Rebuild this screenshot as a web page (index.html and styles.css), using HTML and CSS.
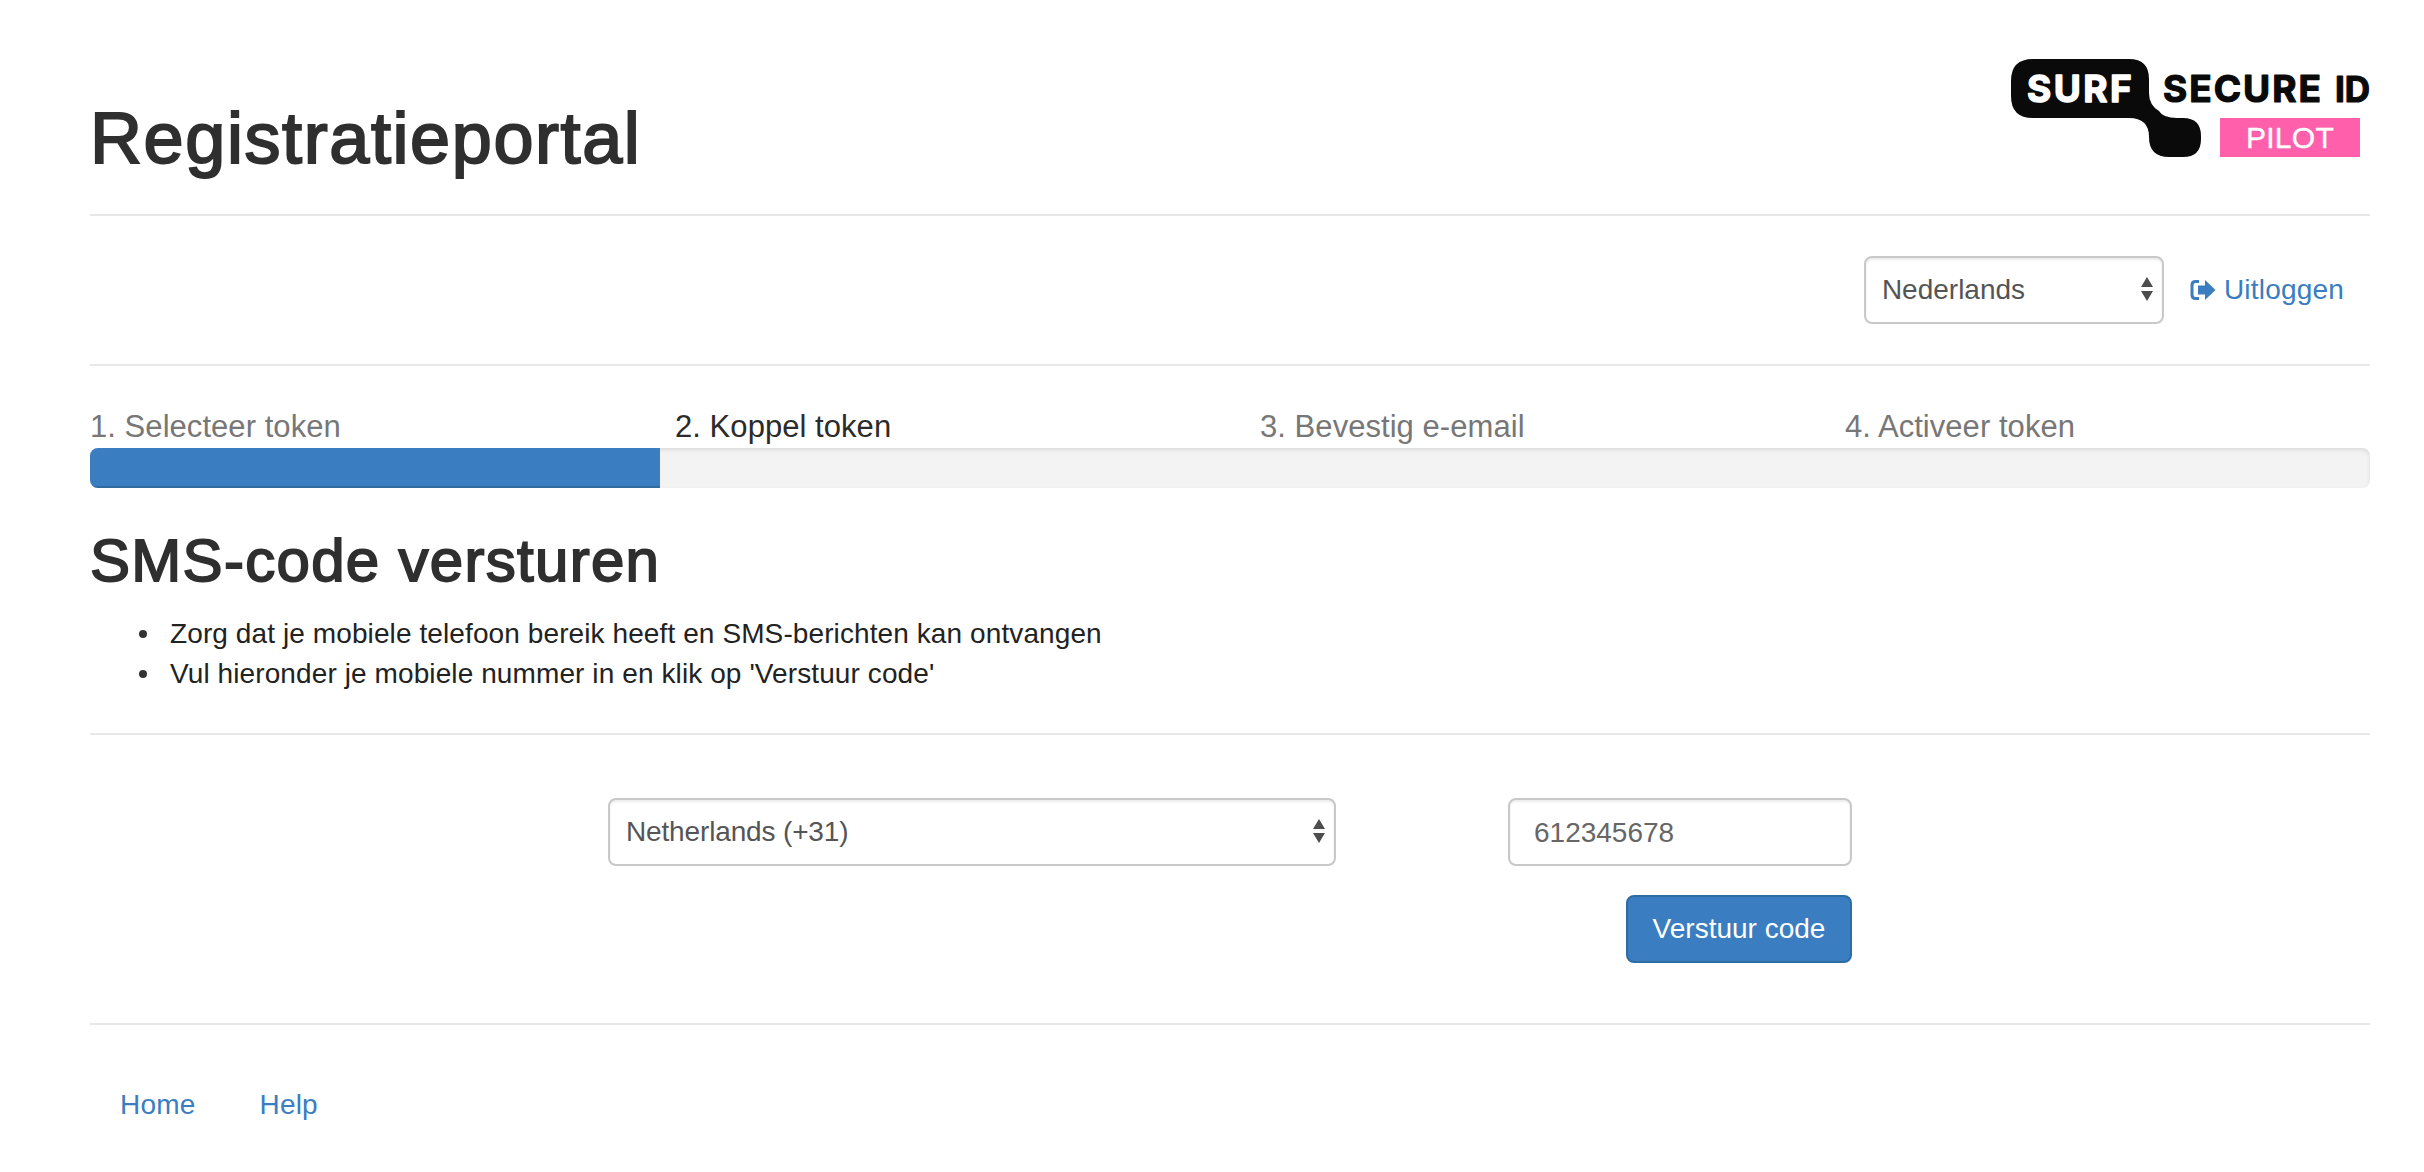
FILE: index.html
```html
<!DOCTYPE html>
<html lang="nl">
<head>
<meta charset="utf-8">
<title>Registratieportal</title>
<link rel="stylesheet" href="styles.css">
</head>
<body>
<div class="page">
  <header class="masthead">
    <h1 class="title">Registratieportal</h1>
    <svg class="logo" width="360" height="100" viewBox="0 0 360 100" role="img" aria-label="SURF Secure ID Pilot">
      <path d="M22 0H118Q138 0 138 20V34Q138 46 148 52Q152 59 166 59H172Q190 59 190 77V80Q190 98 172 98H158Q138 98 138 78Q138 59 118 59H22Q0 59 0 37V22Q0 0 22 0Z" fill="#0a0a0a"/>
      <text x="16" y="43" class="logo-surf">SURF</text>
      <text x="152" y="43" class="logo-secure">SECURE</text>
      <text x="324" y="43" class="logo-secure logo-id">ID</text>
      <rect x="209" y="59" width="140" height="39" fill="#ff5fab"/>
      <text x="279" y="89" text-anchor="middle" class="logo-pilot">PILOT</text>
    </svg>
  </header>
  <hr class="rule">
  <div class="toolbar">
    <div class="select-wrap lang">
      <select class="control"><option>Nederlands</option></select>
      <svg class="updown" width="14" height="28" viewBox="0 0 14 28"><path d="M7 2L13 12H1Z M1 16H13L7 26Z" fill="#4d4d4d"/></svg>
    </div>
    <a class="link logout" href="#">
      <svg class="logout-icon" width="26" height="22" viewBox="0 0 26 22"><path d="M9 2.5H5.5Q2 2.500 2 6V16Q2 19.500 5.500 19.500H9" fill="none" stroke="#3a7dc0" stroke-width="3"/><path d="M8 6.500H15V1L25.500 11L15 21V15.500H8Z" fill="#3a7dc0"/></svg>
      Uitloggen
    </a>
  </div>
  <hr class="rule">
  <ol class="steps">
    <li>1. Selecteer token</li>
    <li class="active">2. Koppel token</li>
    <li>3. Bevestig e-email</li>
    <li>4. Activeer token</li>
  </ol>
  <div class="progress"><div class="bar" style="width:25%"></div></div>
  <h2 class="heading">SMS-code versturen</h2>
  <ul class="notes">
    <li>Zorg dat je mobiele telefoon bereik heeft en SMS-berichten kan ontvangen</li>
    <li>Vul hieronder je mobiele nummer in en klik op 'Verstuur code'</li>
  </ul>
  <hr class="rule">
  <form class="sms-form">
    <div class="form-row">
      <div class="select-wrap country">
        <select class="control"><option>Netherlands (+31)</option></select>
        <svg class="updown" width="14" height="28" viewBox="0 0 14 28"><path d="M7 2L13 12H1Z M1 16H13L7 26Z" fill="#4d4d4d"/></svg>
      </div>
      <input class="control phone" type="text" value="612345678">
    </div>
    <div class="actions"><button class="submit" type="button">Verstuur code</button></div>
  </form>
  <hr class="rule">
  <nav class="footer-nav">
    <a class="link" href="#">Home</a>
    <a class="link" href="#">Help</a>
  </nav>
</div>
</body>
</html>
```
FILE: styles.css
```css
* { box-sizing: border-box; }
html, body { margin: 0; padding: 0; background: #fff; }
body {
  font-family: "Liberation Sans", Arial, sans-serif;
  font-size: 28px;
  line-height: 40px;
  color: #333;
  overflow: hidden;
}
.page { padding: 0 54px 0 90px; }
.masthead { position: relative; height: 214px; }
.title {
  margin: 0;
  padding-top: 95px;
  font-size: 72px;
  line-height: 87px;
  font-weight: 400;
  -webkit-text-stroke: 2px #2f2f2f;
  color: #2f2f2f;
  letter-spacing: 1.6px;
}
.logo { position: absolute; right: -1px; top: 59px; }
.logo text { font-family: "Inter", "Liberation Sans", sans-serif; font-weight: 700; stroke-linejoin: round; }
.logo-surf { font-size: 37px; fill: #fff; stroke: #fff; stroke-width: 1.4px; letter-spacing: 2.5px; }
.logo-secure { font-size: 37px; fill: #0a0a0a; stroke: #0a0a0a; stroke-width: 1.2px; letter-spacing: 2px; }
.logo .logo-id { font-size: 35px; letter-spacing: 0; }
.logo .logo-pilot { font-family: "Liberation Sans", sans-serif; font-weight: 400; font-size: 30px; fill: #fff; stroke: #fff; stroke-width: 0.4px; letter-spacing: 0.3px; }
.rule { margin: 0; border: 0; border-top: 2px solid #e8e8e8; }
.toolbar {
  display: flex;
  justify-content: flex-end;
  align-items: center;
  gap: 26px;
  padding: 40px 26px 40px 0;
}
.select-wrap { position: relative; }
.lang { width: 300px; }
.country { width: 728px; }
.country .control { letter-spacing: -0.15px; }
.updown { position: absolute; right: 10px; top: 19px; }
.control {
  display: block;
  width: 100%;
  height: 68px;
  padding: 0 16px;
  font: inherit;
  color: #555;
  background: #fff;
  border: 2px solid #c8c8c8;
  border-radius: 8px;
  box-shadow: inset 0 2px 2px rgba(0,0,0,.075);
  appearance: none;
  outline: 0;
}
.link { color: #3a7dc0; text-decoration: none; letter-spacing: 0.2px; }
.logout { display: flex; align-items: center; gap: 8px; }
.logout-icon { flex: none; }
.steps {
  display: grid;
  grid-template-columns: repeat(3, 585px) 1fr;
  margin: 0;
  padding: 41px 0 0;
  list-style: none;
  color: #777;
  height: 82px;
  font-size: 31px;
  letter-spacing: 0.05px;
}
.steps .active { color: #2b2b2b; }
.progress {
  height: 40px;
  background: #f3f3f3;
  border-radius: 8px;
  overflow: hidden;
  box-shadow: inset 0 2px 4px rgba(0,0,0,.1);
}
.bar {
  height: 100%;
  background: #3a7dc0;
  box-shadow: inset 0 -2px 0 rgba(0,0,0,.15);
}
.heading {
  margin: 40px 0 20px;
  font-size: 60px;
  line-height: 66px;
  font-weight: 400;
  -webkit-text-stroke: 1.8px #2f2f2f;
  color: #2f2f2f;
  letter-spacing: 1.3px;
}
.notes { margin: 0 0 39px; padding: 0 0 0 80px; color: #222; list-style: none; letter-spacing: 0.1px; }
.notes li { position: relative; }
.notes li::before {
  content: "";
  position: absolute;
  left: -31px;
  top: 16px;
  width: 8px;
  height: 8px;
  border-radius: 50%;
  background: #333;
}
.sms-form { padding: 63px 518px 60px 518px; }
.form-row { display: flex; justify-content: space-between; }
.phone { width: 344px; padding: 2px 24px 0; color: #666; }
.actions { display: flex; justify-content: flex-end; margin-top: 29px; }
.submit {
  width: 226px;
  height: 68px;
  padding: 0;
  font: inherit;
  color: #fff;
  background: #3a7dc0;
  border: 2px solid #2e6da4;
  border-radius: 8px;
}
.footer-nav { display: flex; gap: 64px; padding: 60px 30px 0; }
```
